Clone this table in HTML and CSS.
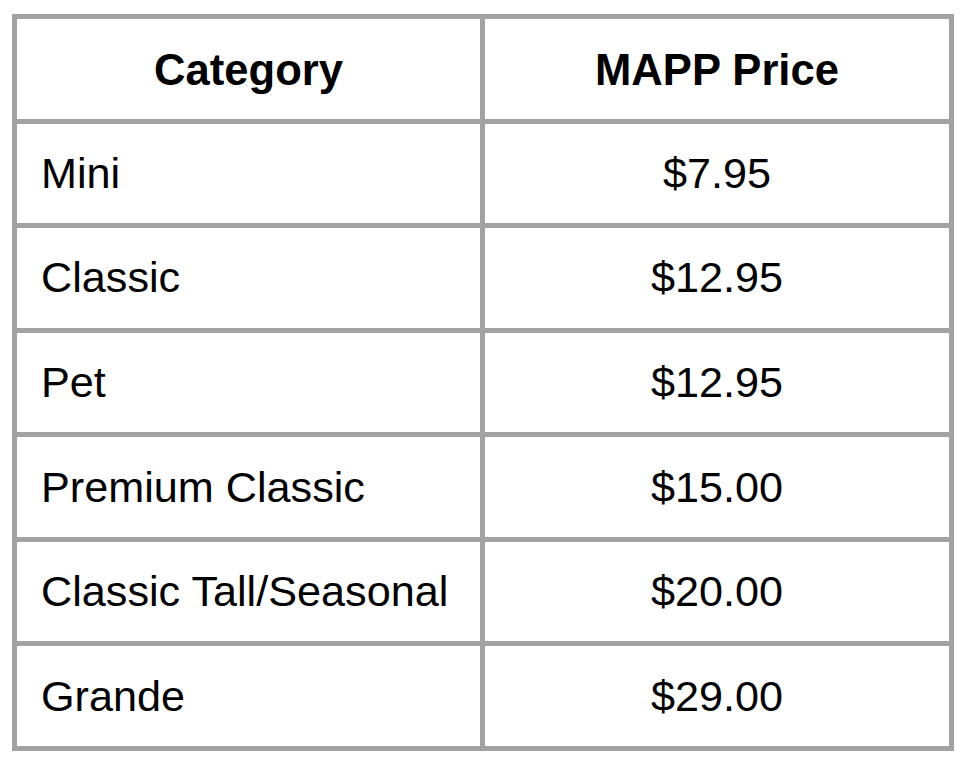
FILE: index.html
```html
<!DOCTYPE html>
<html>
<head>
<meta charset="utf-8">
<link rel="stylesheet" href="styles.css">
</head>
<body>
<div class="table">
  <div class="cell head">Category</div>
  <div class="cell head">MAPP Price</div>
  <div class="cell name">Mini</div>
  <div class="cell price">$7.95</div>
  <div class="cell name">Classic</div>
  <div class="cell price">$12.95</div>
  <div class="cell name">Pet</div>
  <div class="cell price">$12.95</div>
  <div class="cell name">Premium Classic</div>
  <div class="cell price">$15.00</div>
  <div class="cell name">Classic Tall/Seasonal</div>
  <div class="cell price">$20.00</div>
  <div class="cell name">Grande</div>
  <div class="cell price">$29.00</div>
</div>
</body>
</html>
```

FILE: styles.css
```css
html, body {
  margin: 0;
  padding: 0;
  background: #ffffff;
}
body {
  padding: 14px 0 0 12px;
  font-family: "Liberation Sans", Arial, sans-serif;
  color: #000000;
}
.table {
  box-sizing: border-box;
  width: 942px;
  height: 737px;
  display: grid;
  grid-template-columns: 463px 464px;
  grid-template-rows: repeat(7, 1fr);
  gap: 5px;
  padding: 5px;
  background: #a2a2a2;
}
.cell {
  background: #ffffff;
  display: flex;
  align-items: center;
  font-size: 43.2px;
}
.head {
  justify-content: center;
  font-weight: bold;
  font-size: 43.6px;
  padding-top: 3px;
}
.name {
  padding-left: 24px;
}
.price {
  justify-content: center;
}
```
